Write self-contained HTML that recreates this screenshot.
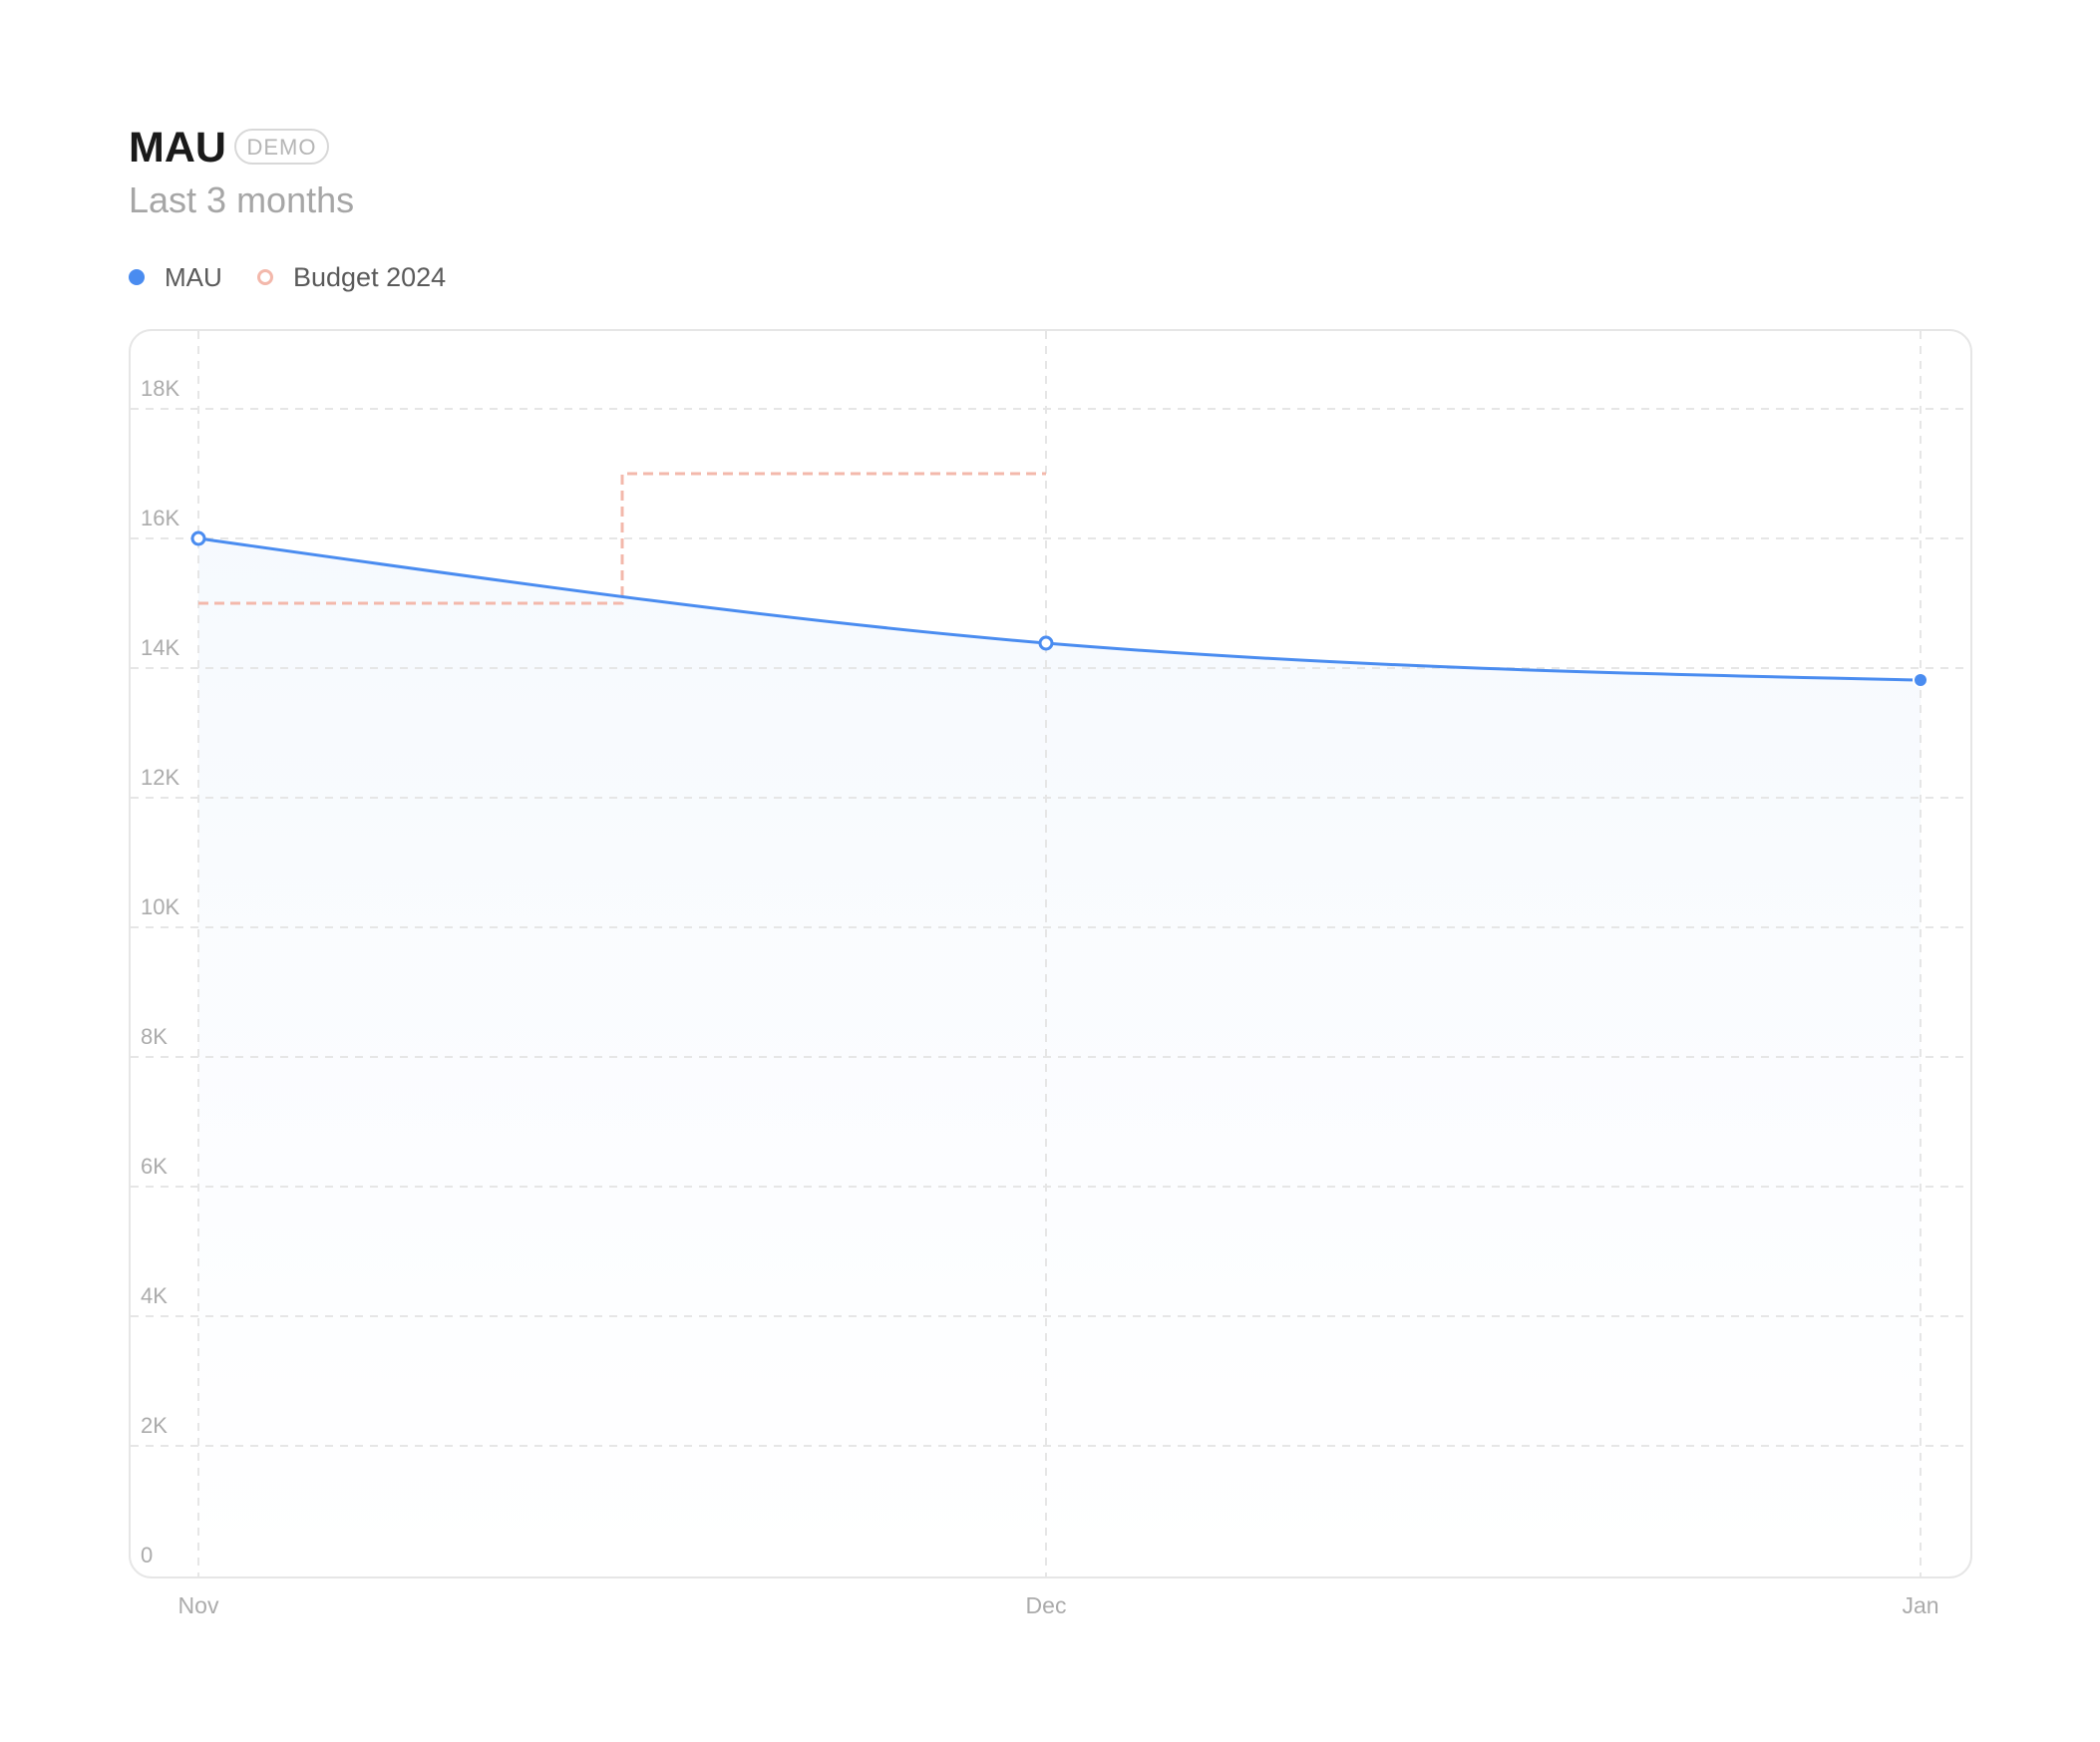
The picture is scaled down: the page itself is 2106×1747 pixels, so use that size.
<!DOCTYPE html>
<html><head><meta charset="utf-8"><style>
html,body{margin:0;padding:0;background:#fff;width:2106px;height:1747px;overflow:hidden;font-family:"Liberation Sans",sans-serif}
</style></head><body>
<svg width="2106" height="1747" viewBox="0 0 2106 1747" xmlns="http://www.w3.org/2000/svg" style="position:absolute;left:0;top:0">
<defs>
<linearGradient id="g" gradientUnits="userSpaceOnUse" x1="0" y1="540" x2="0" y2="1580">
<stop offset="0" stop-color="#4a8cf0" stop-opacity="0.05"/>
<stop offset="0.6" stop-color="#4a8cf0" stop-opacity="0.018"/>
<stop offset="1" stop-color="#4a8cf0" stop-opacity="0"/>
</linearGradient>
</defs>
<text x="129" y="162" font-size="43" font-weight="bold" fill="#1a1a1a">MAU</text>
<rect x="236" y="130" width="93" height="34" rx="17" fill="#fff" stroke="#d8d8d8" stroke-width="2"/>
<text x="282.5" y="155" font-size="22" fill="#b5b5b5" text-anchor="middle" letter-spacing="1">DEMO</text>
<text x="129" y="213" font-size="36" fill="#a6a6a6">Last 3 months</text>
<circle cx="137" cy="278" r="8" fill="#4a8cf0"/>
<text x="165" y="287" font-size="26" fill="#5a5a5a">MAU</text>
<circle cx="266" cy="278" r="6.5" fill="none" stroke="#f3b8ab" stroke-width="3"/>
<text x="294" y="287" font-size="27" fill="#5a5a5a">Budget 2024</text>
<rect x="130" y="331" width="1847" height="1251" rx="22" fill="#fff" stroke="#e6e6e6" stroke-width="2"/>
<path d="M199 540 C483 580 766 621 1049 645 C1341 669 1633 676 1926 682 L1926 1580 L199 1580 Z" fill="url(#g)"/>
<g stroke="#e6e6e6" stroke-width="2" stroke-dasharray="8 7">
<line x1="131" x2="1976" y1="410" y2="410"/><line x1="131" x2="1976" y1="540" y2="540"/>
<line x1="131" x2="1976" y1="670" y2="670"/><line x1="131" x2="1976" y1="800" y2="800"/>
<line x1="131" x2="1976" y1="930" y2="930"/><line x1="131" x2="1976" y1="1060" y2="1060"/>
<line x1="131" x2="1976" y1="1190" y2="1190"/><line x1="131" x2="1976" y1="1320" y2="1320"/>
<line x1="131" x2="1976" y1="1450" y2="1450"/>
<line x1="199" x2="199" y1="332" y2="1581"/><line x1="1049" x2="1049" y1="332" y2="1581"/><line x1="1926" x2="1926" y1="332" y2="1581"/>
</g>
<g font-size="22" fill="#ababab">
<text x="141" y="397">18K</text><text x="141" y="527">16K</text><text x="141" y="657">14K</text>
<text x="141" y="787">12K</text><text x="141" y="917">10K</text><text x="141" y="1047">8K</text>
<text x="141" y="1177">6K</text><text x="141" y="1307">4K</text><text x="141" y="1437">2K</text>
<text x="141" y="1567">0</text>
</g>
<g font-size="23" fill="#ababab" text-anchor="middle">
<text x="199" y="1618">Nov</text><text x="1049" y="1618">Dec</text><text x="1926" y="1618">Jan</text>
</g>
<path d="M199 605 L624 605 L624 475 L1049 475" fill="none" stroke="#f3b8ab" stroke-width="3" stroke-dasharray="10 6"/>
<path d="M199 540 C483 580 766 621 1049 645 C1341 669 1633 676 1926 682" fill="none" stroke="#4a8cf0" stroke-width="3"/>
<circle cx="199" cy="540" r="6" fill="#fff" stroke="#4a8cf0" stroke-width="3"/>
<circle cx="1049" cy="645" r="6" fill="#fff" stroke="#4a8cf0" stroke-width="3"/>
<circle cx="1926" cy="682" r="7" fill="#4a8cf0" stroke="#fff" stroke-width="2"/>
</svg>
</body></html>
